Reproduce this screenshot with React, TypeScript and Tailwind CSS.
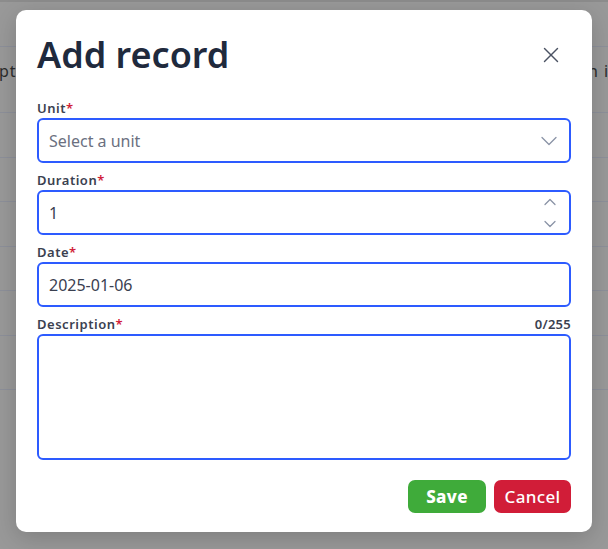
import { X, ChevronDown, ChevronUp } from "lucide-react";

const rows = [45, 66, 45, 44, 45, 44, 45, 54];

function Label({ text, right }: { text: string; right?: string }) {
  return (
    <div className="flex items-center justify-between h-[18px] mb-[1px] text-[13px] leading-[18px] font-semibold tracking-[0.04em] text-[#3b4150]">
      <span>
        {text}
        <span className="text-[#d11d38]">*</span>
      </span>
      {right && <span className="tracking-[0.02em]">{right}</span>}
    </div>
  );
}

export default function App() {
  return (
    <div className="relative w-[608px] h-[549px] overflow-hidden bg-[#999999] font-['Noto_Sans',sans-serif]">
      {/* table behind overlay */}
      <div className="flex flex-col border-t-2 border-[#8c8c8c]">
        {rows.map((h, i) => (
          <div
            key={i}
            style={{ height: h }}
            className="flex items-start justify-between border-b border-[#8d909a] text-[16px] leading-[24px] text-[#2c2c2c] tracking-[0.06em]"
          >
            {i === 1 && (
              <>
                <span className="mt-[12px] -ml-[1px]">pt</span>
                <span className="mt-[12px] mr-[-1px]">n i</span>
              </>
            )}
          </div>
        ))}
      </div>

      {/* dialog */}
      <div className="absolute left-[16px] top-[10px] w-[576px] h-[522px] bg-white rounded-[10px] shadow-[0_6px_24px_rgba(0,0,0,0.18)] px-[21px] pt-[22px] pb-[19px] flex flex-col">
        <div className="flex items-center justify-between h-[46px]">
          <h1 className="text-[36px] leading-[46px] font-semibold text-[#1f2a3d]">
            Add record
          </h1>
          <X size={26} strokeWidth={1.3} className="text-[#4b5263] mr-[7px]" />
        </div>

        <div className="mt-[21px] flex flex-col gap-[8px]">
          <div>
            <Label text="Unit" />
            <div className="h-[45px] border-2 border-[#2d5bff] rounded-[6px] flex items-center justify-between pl-[10px] pr-[6px] text-[16px] text-[#6b7080]">
              <span>Select a unit</span>
              <ChevronDown size={28} strokeWidth={1.1} className="text-[#8a93a6]" />
            </div>
          </div>
          <div>
            <Label text="Duration" />
            <div className="h-[45px] border-2 border-[#2d5bff] rounded-[6px] flex items-center justify-between pl-[10px] pr-[9px] text-[16px] text-[#3a4050]">
              <span>1</span>
              <div className="flex flex-col items-center gap-[2px] text-[#8a93a6]">
                <ChevronUp size={20} strokeWidth={1.5} />
                <ChevronDown size={20} strokeWidth={1.5} />
              </div>
            </div>
          </div>
          <div>
            <Label text="Date" />
            <div className="h-[45px] border-2 border-[#2d5bff] rounded-[6px] flex items-center pl-[10px] text-[16px] text-[#3a4050]">
              2025-01-06
            </div>
          </div>
          <div>
            <Label text="Description" right="0/255" />
            <div className="h-[126px] border-2 border-[#2d5bff] rounded-[6px]" />
          </div>
        </div>

        <div className="mt-auto flex justify-end gap-[8px]">
          <button className="w-[78px] h-[33px] rounded-[7px] bg-[#3fab3a] text-white text-[17px] font-extrabold tracking-[0.02em] flex items-center justify-center">
            Save
          </button>
          <button className="w-[77px] h-[33px] rounded-[7px] bg-[#d11d38] text-white text-[17px] font-medium tracking-[0.02em] flex items-center justify-center">
            Cancel
          </button>
        </div>
      </div>
    </div>
  );
}
